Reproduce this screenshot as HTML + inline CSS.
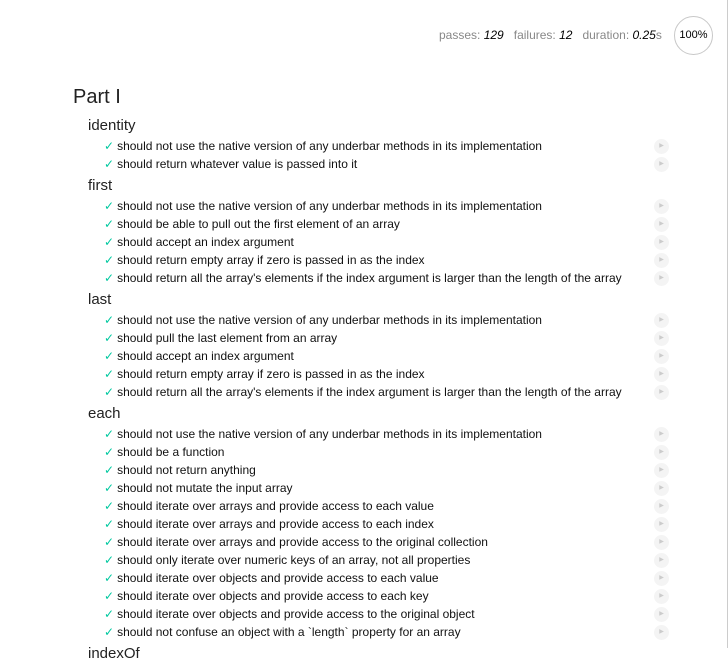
<!DOCTYPE html>
<html><head><style>
body{margin:0;width:728px;height:648px;overflow:hidden;background:#fff;font-family:"Liberation Sans",sans-serif;color:#000;position:relative}
.frame{position:absolute;right:0;top:0;width:1px;height:648px;background:#ccc}
#stats{position:absolute;top:28px;left:439px;font-size:12px;color:#888;white-space:nowrap}
#stats em{color:#000}
#ring{position:absolute;left:674px;top:16px;border:1px solid #c8c8c8;border-radius:50%;font-size:11px;text-align:center;box-sizing:border-box;width:39px;height:39px;line-height:37px}
.h1{position:absolute;left:73px;top:86px;font-size:20px;color:#222}
.h2{position:absolute;left:88px;font-size:15px;color:#222}
.t{position:absolute;left:104px;font-size:12px;white-space:nowrap;line-height:18px;color:#111}
.t b{color:#00c9a0;font-weight:normal;margin-right:3px;font-size:12px}
.r{position:absolute;left:654px;width:15px;height:15px;border-radius:50%;background:#f4f4f4;color:#ccc;font-size:6px;line-height:15px;text-align:center}
</style></head><body>
<div class="frame"></div>
<div id="stats">passes: <em>129</em>&nbsp;&nbsp; failures: <em>12</em>&nbsp;&nbsp; duration: <em>0.25</em>s</div>
<div id="ring">100%</div>
<div class="h1">Part I</div>
<div id="c"></div>
<script>
var d=[["identity",117,["should not use the native version of any underbar methods in its implementation","should return whatever value is passed into it"]],
["first",177,["should not use the native version of any underbar methods in its implementation","should be able to pull out the first element of an array","should accept an index argument","should return empty array if zero is passed in as the index","should return all the array's elements if the index argument is larger than the length of the array"]],
["last",291,["should not use the native version of any underbar methods in its implementation","should pull the last element from an array","should accept an index argument","should return empty array if zero is passed in as the index","should return all the array's elements if the index argument is larger than the length of the array"]],
["each",405,["should not use the native version of any underbar methods in its implementation","should be a function","should not return anything","should not mutate the input array","should iterate over arrays and provide access to each value","should iterate over arrays and provide access to each index","should iterate over arrays and provide access to the original collection","should only iterate over numeric keys of an array, not all properties","should iterate over objects and provide access to each value","should iterate over objects and provide access to each key","should iterate over objects and provide access to the original object","should not confuse an object with a `length` property for an array"]],
["indexOf",645,[]]];
var h="";d.forEach(function(s){h+='<div class="h2" style="top:'+s[1]+'px">'+s[0]+'</div>';s[2].forEach(function(t,i){var y=s[1]+20+i*18;h+='<div class="t" style="top:'+(y)+'px"><b>✓</b>'+t.replace(/</g,"&lt;")+'</div><div class="r" style="top:'+(y+1.5)+'px">▶</div>';});});
document.getElementById("c").innerHTML=h;
</script>
</body></html>
